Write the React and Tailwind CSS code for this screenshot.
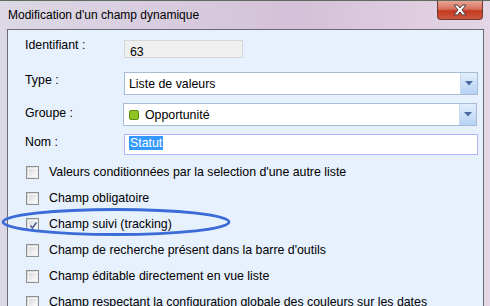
import React from "react";

function Checkbox({ checked }) {
  return (
    <div className="w-[13px] h-[13px] border border-[#8e8f8f] bg-[linear-gradient(135deg,#d2d2d2,#f6f6f6)] p-[1px] shrink-0">
      <div className="w-full h-full border border-[#f4f4f4] bg-[linear-gradient(135deg,#dadada,#fafafa)] relative">
        {checked && (
          <svg width="11" height="11" viewBox="0 0 11 11" className="absolute -left-[1px] -top-[1px]">
            <path d="M2.5 5.5 L4.5 8 L8.5 2.5" fill="none" stroke="#4b5f94" strokeWidth="1.6" />
          </svg>
        )}
      </div>
    </div>
  );
}

function DropBtn() {
  return (
    <div className="w-[17px] h-full border-l border-[#c9dbf1] bg-[linear-gradient(180deg,#e3eefc,#b6d2f6)] flex items-center justify-center">
      <svg width="8" height="5" viewBox="0 0 8 5">
        <path d="M0 0 H8 L4 4.5 Z" fill="#4a6b9c" />
      </svg>
    </div>
  );
}

const checks = [
  ["Valeurs conditionnées par la selection d'une autre liste", false],
  ["Champ obligatoire", false],
  ["Champ suivi (tracking)", true],
  ["Champ de recherche présent dans la barre d'outils", false],
  ["Champ éditable directement en vue liste", false],
  ["Champ respectant la configuration globale des couleurs sur les dates", false],
];

export default function App() {
  return (
    <div
      className="relative w-[490px] h-[306px] overflow-hidden bg-[linear-gradient(90deg,#dcd8e5_0%,#d6c8dc_45%,#d4c0d8_60%,#e4d6e4_100%)] border-t border-[#5f6c5b] text-[12px] text-black"
      style={{ fontFamily: '"Liberation Sans", Arial, sans-serif' }}
    >
      {/* title bar */}
      <div className="h-[28px] pl-[8px] pt-[7px] leading-[14px] text-[12px] text-black">
        Modification d'un champ dynamique
      </div>

      {/* close button */}
      <div className="absolute left-[437px] top-0 w-[46px] h-[19px] rounded-b-[4px] border border-t-0 border-[#6f3a34] bg-[linear-gradient(180deg,#e9a595_0%,#d8705b_45%,#c2391f_55%,#d0583f_100%)] flex items-center justify-center">
        <svg width="16" height="12" viewBox="0 0 16 12">
          <path
            d="M2 1 H5.5 L8 4 L10.5 1 H14 L10 6 L14 11 H10.5 L8 8 L5.5 11 H2 L6 6 Z"
            fill="#ffffff"
            stroke="#4a3a3a"
            strokeWidth="1"
            strokeLinejoin="round"
          />
        </svg>
      </div>

      {/* panel */}
      <div className="ml-[7px] w-[477px] border border-[#6a6a70] bg-[#e7f0fd] pl-[17px] pr-[5px] pt-[10px] h-[300px] text-[12.35px]">
        {/* Identifiant */}
        <div className="flex items-start">
          <div className="w-[99px] mt-[-2px] leading-[14px]">Identifiant :</div>
          <div className="w-[119px] h-[18px] border border-[#d6d6d6] bg-[#efefef] pl-[5px] pt-[4px] leading-[14px]">
            63
          </div>
        </div>

        {/* Type */}
        <div className="flex items-start mt-[14px]">
          <div className="w-[99px] mt-[1px] leading-[14px]">Type :</div>
          <div className="w-[354px] h-[23px] border border-[#a9bcd6] bg-white flex items-stretch">
            <div className="flex-1 flex items-center pl-[4px] leading-[14px]">Liste de valeurs</div>
            <DropBtn />
          </div>
        </div>

        {/* Groupe */}
        <div className="flex items-start mt-[8px]">
          <div className="w-[99px] mt-[3px] leading-[14px]">Groupe :</div>
          <div className="w-[354px] h-[23px] border border-[#a9bcd6] bg-white flex items-stretch ml-[-1px]">
            <div className="flex-1 flex items-center pl-[5px] leading-[14px]">
              <div className="w-[10px] h-[10px] rounded-[2px] bg-[#8fc31f] border border-[#5f8e12] mr-[6px]" />
              Opportunité
            </div>
            <DropBtn />
          </div>
        </div>

        {/* Nom */}
        <div className="flex items-start mt-[8px]">
          <div className="w-[99px] mt-[1px] leading-[14px]">Nom :</div>
          <div className="w-[354px] h-[21px] border border-[#b3b3fb] bg-white flex items-start pl-[4px] pt-[1px]">
            <span className="bg-[#3399ff] text-white leading-[14px] px-[1px]">Statut</span>
          </div>
        </div>

        {/* checkboxes */}
        <div className="mt-[4px] flex flex-col">
          {checks.map(([label, c], i) => (
            <div key={i} className="h-[26px] flex items-center">
              <div className="ml-[1px]">
                <Checkbox checked={c} />
              </div>
              <div className="ml-[10px] leading-[14px] whitespace-nowrap">{label}</div>
            </div>
          ))}
        </div>
      </div>

      {/* annotation ellipse */}
      <svg className="absolute left-0 top-0 pointer-events-none" width="490" height="306">
        <ellipse cx="116" cy="221" rx="113" ry="12.5" fill="none" stroke="#3a6bd6" strokeWidth="2.8" />
      </svg>
    </div>
  );
}
